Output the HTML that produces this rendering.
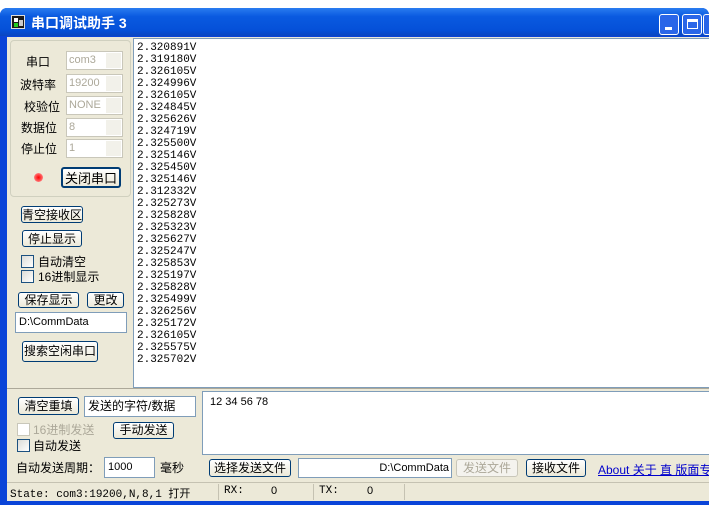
<!DOCTYPE html>
<html><head><meta charset="utf-8"><style>
*{margin:0;padding:0;box-sizing:border-box}
body{width:709px;height:505px;background:#fff;position:relative;overflow:hidden;font-family:"Liberation Sans","Noto Sans CJK SC",sans-serif;font-size:12px;color:#000}
.a{position:absolute;white-space:nowrap}
.btn{position:absolute;background:linear-gradient(#fff,#ece9d8);border:1px solid #003c74;border-radius:3px;text-align:center;font-size:12px;line-height:16px;white-space:nowrap}
.inp{position:absolute;background:#fff;border:1px solid #7f9db9;font-size:11px;padding-left:3px;white-space:nowrap}
.cb{position:absolute;width:13px;height:13px;border:1px solid #1c5180;background:linear-gradient(135deg,#dcdcd7,#fff)}
.combo{position:absolute;width:57px;height:19px;border:1px solid #c9c7ba;background:#fff;color:#aca899;font-size:11px;padding-left:2px;line-height:17px}
.combo:after{content:"";position:absolute;right:1px;top:1px;width:15px;height:15px;background:#f2f1ea}
.mono{font-family:"Liberation Mono","Noto Sans CJK SC",monospace}
</style></head><body>
<div class="a" style="left:0;top:8px;width:709px;height:497px;background:#0a44d8;border-radius:7px 7px 0 0"></div>
<div class="a" style="left:0;top:8px;width:709px;height:28px;border-radius:7px 7px 0 0;background:linear-gradient(#2a7cf0,#0a5ae0 30%,#0550d8 80%,#0a46c0)"></div>
<div class="a" style="left:11px;top:15px;width:14px;height:14px;background:#1a1a1a;border:1px solid #ddd"><div class="a" style="left:2px;top:2px;width:4px;height:4px;background:#fff"></div><div class="a" style="left:2px;top:7px;width:4px;height:4px;background:#2c2"></div><div class="a" style="left:7px;top:4px;width:4px;height:6px;background:#ccc"></div></div>
<div class="a" style="left:31px;top:13px;color:#fff;font-weight:bold;font-size:14px">串口调试助手 3</div>
<div class="a" style="left:659px;top:14px;width:20px;height:21px;border:1px solid #fff;border-radius:3px;background:#2a66e8"><div class="a" style="left:5px;top:12px;width:7px;height:3px;background:#fff"></div></div>
<div class="a" style="left:682px;top:14px;width:20px;height:21px;border:1px solid #fff;border-radius:3px;background:#2a66e8"><div class="a" style="left:4px;top:4px;width:11px;height:10px;border:1px solid #fff;border-top-width:3px"></div></div>
<div class="a" style="left:703px;top:14px;width:6px;height:21px;border:1px solid #fff;border-right:0;border-radius:3px 0 0 3px;background:#2a66e8"></div>
<div class="a" style="left:7px;top:37px;width:702px;height:465px;background:#ece9d8"></div>
<div class="a" style="left:10px;top:40px;width:121px;height:157px;border:1px solid #d0d0bf;border-radius:4px"></div>
<div class="a" style="left:26px;top:53px">串口</div>
<div class="a" style="left:20px;top:76px">波特率</div>
<div class="a" style="left:24px;top:98px">校验位</div>
<div class="a" style="left:21px;top:119px">数据位</div>
<div class="a" style="left:21px;top:140px">停止位</div>
<div class="combo" style="left:66px;top:51px">com3</div>
<div class="combo" style="left:66px;top:74px">19200</div>
<div class="combo" style="left:66px;top:96px">NONE</div>
<div class="combo" style="left:66px;top:118px">8</div>
<div class="combo" style="left:66px;top:139px">1</div>
<div class="a" style="left:34px;top:173px;width:9px;height:9px;border-radius:50%;background:radial-gradient(#f00,#f66 60%,#fcc)"></div>
<div class="btn" style="left:61px;top:167px;width:60px;height:21px;line-height:19px;border:2px solid #003c74;font-size:13px">关闭串口</div>
<div class="btn" style="left:21px;top:206px;width:62px;height:17px">青空接收区</div>
<div class="btn" style="left:22px;top:230px;width:60px;height:17px">停止显示</div>
<div class="cb" style="left:21px;top:255px"></div><div class="a" style="left:38px;top:253px">自动清空</div>
<div class="cb" style="left:21px;top:270px"></div><div class="a" style="left:38px;top:268px">16进制显示</div>
<div class="btn" style="left:18px;top:292px;width:61px;height:16px;line-height:14px">保存显示</div>
<div class="btn" style="left:87px;top:292px;width:37px;height:16px;line-height:14px">更改</div>
<div class="inp" style="left:15px;top:312px;width:112px;height:21px;line-height:19px">D:\CommData</div>
<div class="btn" style="left:22px;top:341px;width:76px;height:21px;line-height:19px">搜索空闲串口</div>
<div class="a mono" style="left:133px;top:38px;width:576px;height:350px;background:#fff;border:1px solid #7f9db9;border-right:0;font-size:11px;line-height:12px;padding:3px 0 0 3px;color:#000">2.320891V<br>2.319180V<br>2.326105V<br>2.324996V<br>2.326105V<br>2.324845V<br>2.325626V<br>2.324719V<br>2.325500V<br>2.325146V<br>2.325450V<br>2.325146V<br>2.312332V<br>2.325273V<br>2.325828V<br>2.325323V<br>2.325627V<br>2.325247V<br>2.325853V<br>2.325197V<br>2.325828V<br>2.325499V<br>2.326256V<br>2.325172V<br>2.326105V<br>2.325575V<br>2.325702V</div>
<div class="a" style="left:7px;top:388px;width:702px;height:1px;background:#aca899"></div>
<div class="btn" style="left:18px;top:397px;width:61px;height:18px">清空重填</div>
<div class="inp" style="left:84px;top:396px;width:112px;height:21px;line-height:19px;font-size:12px">发送的字符/数据</div>
<div class="a" style="left:202px;top:391px;width:507px;height:64px;background:#fff;border:1px solid #7f9db9;border-right:0;font-size:11px;padding:4px 0 0 7px">12 34 56 78</div>
<div class="cb" style="left:17px;top:423px;border-color:#c9c7ba;background:#fff"></div><div class="a" style="left:33px;top:421px;color:#aca899">16进制发送</div>
<div class="btn" style="left:113px;top:422px;width:61px;height:17px;line-height:15px">手动发送</div>
<div class="cb" style="left:17px;top:439px"></div><div class="a" style="left:33px;top:437px">自动发送</div>
<div class="a" style="left:16px;top:459px">自动发送周期：</div>
<div class="inp" style="left:104px;top:457px;width:51px;height:21px;line-height:19px">1000</div>
<div class="a" style="left:160px;top:459px">毫秒</div>
<div class="btn" style="left:209px;top:459px;width:82px;height:18px">选择发送文件</div>
<div class="inp" style="left:298px;top:458px;width:154px;height:20px;line-height:18px;text-align:right;padding-right:2px">D:\CommData</div>
<div class="btn" style="left:456px;top:459px;width:62px;height:18px;color:#aca899;border-color:#c9c7ba;background:#f4f3ee">发送文件</div>
<div class="btn" style="left:526px;top:459px;width:60px;height:18px">接收文件</div>
<div class="a" style="left:598px;top:461px;color:#00c;text-decoration:underline;font-size:12px">About 关于 直 版面专</div>
<div class="a" style="left:7px;top:482px;width:702px;height:1px;background:#c5c2b2"></div>
<div class="a mono" style="left:10px;top:485px;font-size:11px">State: com3:19200,N,8,1 打开</div>
<div class="a" style="left:218px;top:484px;width:1px;height:16px;background:#c5c2b2"></div>
<div class="a mono" style="left:224px;top:485px;font-size:11px">RX:</div><div class="a" style="left:271px;top:485px;font-size:11px">0</div>
<div class="a" style="left:313px;top:484px;width:1px;height:16px;background:#c5c2b2"></div>
<div class="a mono" style="left:319px;top:485px;font-size:11px">TX:</div><div class="a" style="left:367px;top:485px;font-size:11px">0</div>
<div class="a" style="left:404px;top:484px;width:1px;height:16px;background:#c5c2b2"></div>
<div class="a" style="left:0;top:501px;width:709px;height:4px;background:#0a44d8"></div>
</body></html>
